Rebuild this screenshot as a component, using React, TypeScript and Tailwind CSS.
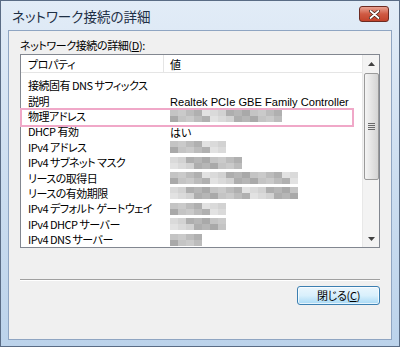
import React from "react";

const font = { fontFamily: '"Noto Sans CJK JP", "Noto Sans", sans-serif', fontFeatureSettings: '"palt"' };
const latin = { fontFamily: '"Liberation Sans", "Noto Sans CJK JP", sans-serif' };

type Row = { name: string; value?: string; blur?: number; latinValue?: boolean };

const rows: Row[] = [
  { name: "接続固有 DNS サフィックス" },
  { name: "説明", value: "Realtek PCIe GBE Family Controller", latinValue: true },
  { name: "物理アドレス", blur: 112 },
  { name: "DHCP 有効", value: "はい" },
  { name: "IPv4 アドレス", blur: 50 },
  { name: "IPv4 サブネット マスク", blur: 72 },
  { name: "リースの取得日", blur: 128 },
  { name: "リースの有効期限", blur: 128 },
  { name: "IPv4 デフォルト ゲートウェイ", blur: 56 },
  { name: "IPv4 DHCP サーバー", blur: 56 },
  { name: "IPv4 DNS サーバー", blur: 32 },
];

const shades = ["#c4c4c4", "#b0b0b0", "#d2d2d2", "#a9a9a9", "#bcbcbc", "#dadada", "#b6b6b6", "#cacaca", "#e2e2e2", "#aeaeae"];

function Mosaic({ width, seed }: { width: number; seed: number }) {
  const cols = Math.ceil(width / 8);
  return (
    <div className="flex flex-col" style={{ width }}>
      {[0, 1].map((r) => (
        <div key={r} className="flex h-[6px]">
          {Array.from({ length: cols }).map((_, c) => (
            <div
              key={c}
              className="h-[6px] w-[8px] shrink-0"
              style={{ backgroundColor: shades[(c * 7 + r * 3 + seed * 5) % shades.length] }}
            />
          ))}
        </div>
      ))}
    </div>
  );
}

export default function App() {
  return (
    <div className="w-[400px] h-[347px] overflow-hidden bg-white" style={font}>
      <div className="w-[400px] h-[347px] border border-[#5a6c85] bg-gradient-to-b from-[#e2ecf7] via-[#cddef0] to-[#bcd3eb] flex flex-col px-[7px] pb-[6px]">
        {/* Title bar */}
        <div className="h-[29px] flex items-center justify-between shrink-0">
          <span className="pl-[4px] pt-[2px] text-[13.5px] text-[#1e2f45]">ネットワーク接続の詳細</span>
          <div className="mr-[3px] mt-[-3px] w-[30px] h-[16px] rounded-[3px] border border-[#6d2b22] bg-gradient-to-b from-[#e8a394] via-[#cf5a43] to-[#c2432b] flex items-center justify-center">
            <svg width="11" height="9" viewBox="0 0 11 9">
              <path d="M1.5 1 L9.5 8 M9.5 1 L1.5 8" stroke="#3a1a12" strokeWidth="3.2" strokeLinecap="round" />
              <path d="M1.5 1 L9.5 8 M9.5 1 L1.5 8" stroke="#ffffff" strokeWidth="1.8" strokeLinecap="round" />
            </svg>
          </div>
        </div>
        {/* Client area */}
        <div className="flex-1 bg-[#f0f0f0] border border-[#8fa5c2] flex flex-col px-[11px] pt-[6px]">
          <div className="text-[11px] leading-[16px] tracking-[-0.4px] text-black">
            ネットワーク接続の詳細(<span className="underline">D</span>):
          </div>
          <div className="mt-[1px] h-[194px] border border-[#828790] bg-white flex relative">
            <div className="flex-1 flex flex-col overflow-hidden">
              {/* header */}
              <div className="h-[18px] flex border-b border-[#e5e5e5] text-[11px] leading-[18px] tracking-[-0.4px] text-black shrink-0">
                <div className="w-[143px] pl-[7px] border-r border-[#e5e5e5]">プロパティ</div>
                <div className="pl-[6px]">値</div>
              </div>
              <div className="pt-[5px] flex flex-col">
                {rows.map((r, i) => (
                  <div key={i} className="h-[15.4px] flex items-center leading-[15px] text-black">
                    <div className="w-[143px] shrink-0 pl-[7px] whitespace-nowrap text-[11px] tracking-[-0.5px]">{r.name}</div>
                    <div className="pl-[6px] whitespace-nowrap">
                      {r.value ? (
                        r.latinValue ? (
                          <span className="text-[11.1px]" style={latin}>{r.value}</span>
                        ) : (
                          <span className="text-[11px]">{r.value}</span>
                        )
                      ) : r.blur ? (
                        <Mosaic width={r.blur} seed={i} />
                      ) : null}
                    </div>
                  </div>
                ))}
              </div>
            </div>
            {/* scrollbar */}
            <div className="w-[17px] bg-[#f3f3f3] border-l border-[#e8e8e8] flex flex-col items-center shrink-0">
              <div className="h-[17px] w-full flex items-center justify-center">
                <svg width="7" height="4" viewBox="0 0 7 4"><path d="M0 4 L3.5 0 L7 4 Z" fill="#404040" /></svg>
              </div>
              <div className="mt-[1px] h-[107px] w-[15px] rounded-[2px] border border-[#9a9a9a] bg-gradient-to-r from-[#f4f4f4] via-[#e4e4e4] to-[#d4d4d4] flex items-center justify-center">
                <div className="flex flex-col gap-[1px]">
                  <div className="h-[1px] w-[7px] bg-[#6a6a6a]" />
                  <div className="h-[1px] w-[7px] bg-[#6a6a6a]" />
                  <div className="h-[1px] w-[7px] bg-[#6a6a6a]" />
                  <div className="h-[1px] w-[7px] bg-[#6a6a6a]" />
                </div>
              </div>
              <div className="flex-1" />
              <div className="h-[17px] w-full flex items-center justify-center">
                <svg width="7" height="4" viewBox="0 0 7 4"><path d="M0 0 L3.5 4 L7 0 Z" fill="#404040" /></svg>
              </div>
            </div>
            {/* pink highlight */}
            <div className="absolute left-[-1px] top-[53px] w-[334px] h-[19px] border-2 border-[#f0a8c8]" />
          </div>
          <div className="mt-[31px] h-[2px] border-t border-[#a0a0a0] border-b border-b-white" />
          <div className="mt-[5px] flex justify-end">
            <div className="w-[83px] h-[19px] rounded-[3px] border border-[#3c7fb1] bg-gradient-to-b from-[#eaf6fd] via-[#d9f0fc] to-[#a7d9f5] flex items-center justify-center text-[11px] tracking-[-0.3px] leading-none text-black shadow-[inset_0_0_0_1px_rgba(255,255,255,0.7)]">
              閉じる(<span className="underline">C</span>)
            </div>
          </div>
        </div>
      </div>
    </div>
  );
}
